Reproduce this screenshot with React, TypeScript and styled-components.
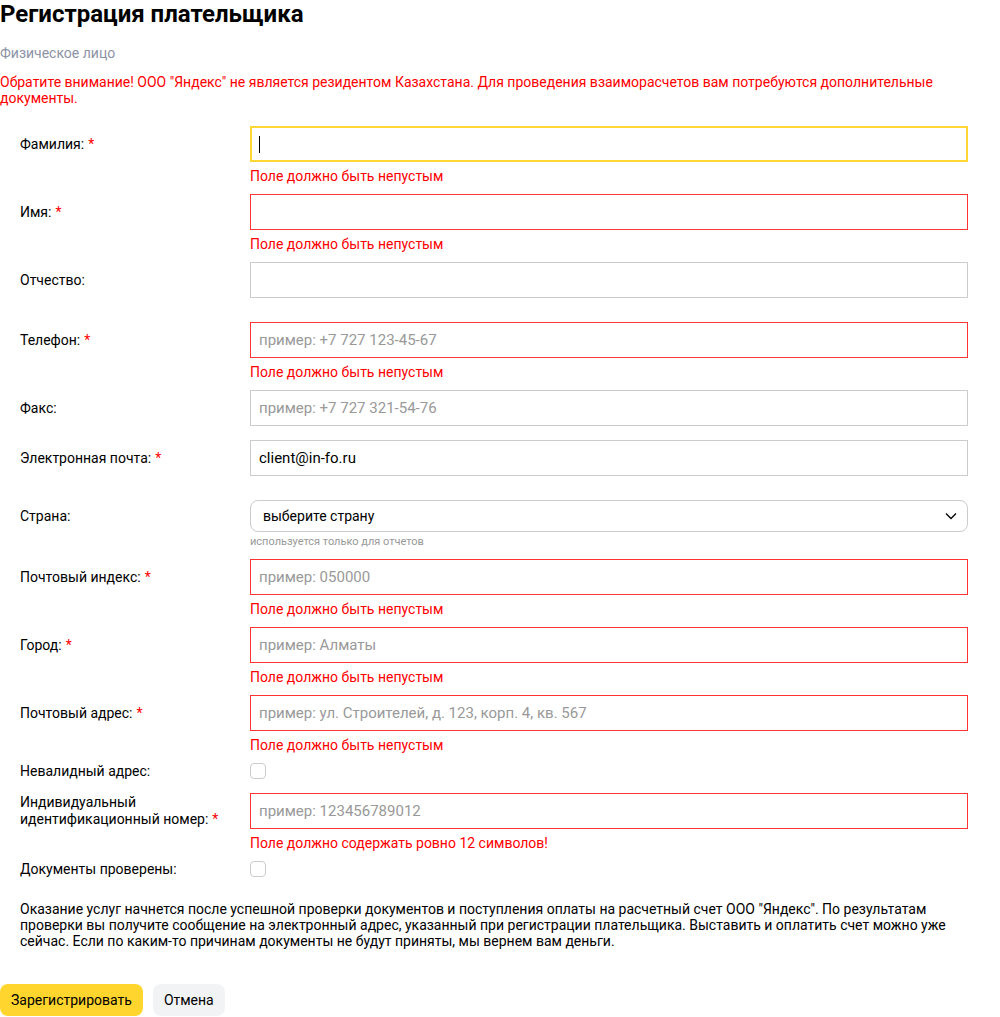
import { createGlobalStyle } from "styled-components";
import styled from "styled-components";

const GlobalStyle = createGlobalStyle`
  body {
    margin: 0;
    background: #fff;
    font-family: Roboto, "Noto Sans", Arial, sans-serif;
    font-size: 14px;
    color: #000;
  }
`;

const Page = styled.div`
  width: 968px;
`;

const Title = styled.h1`
  margin: 0;
  font-size: 24px;
  line-height: 28px;
  font-weight: 700;
`;

const Subtitle = styled.div`
  margin-top: 16px;
  color: #8c93a6;
  line-height: 18px;
`;

const Warning = styled.div`
  margin-top: 12px;
  color: #ff0000;
  line-height: 16px;
`;

const Form = styled.div`
  margin-top: 20px;
`;

const Row = styled.div<{ $after: number }>`
  display: grid;
  grid-template-columns: 250px 718px;
  margin-bottom: ${(p) => p.$after}px;
`;

const Label = styled.div<{ $h: number }>`
  padding-left: 20px;
  height: ${(p) => p.$h}px;
  display: flex;
  align-items: center;
  line-height: 17px;
`;

const Req = styled.span`
  color: #ff0000;
  margin-left: 4px;
`;

const Field = styled.div`
  display: flex;
  flex-direction: column;
`;

const Input = styled.input<{ $state?: "error" | "focus" }>`
  box-sizing: border-box;
  width: 100%;
  height: 36px;
  margin: 0;
  padding: 0 8px;
  font: inherit;
  font-size: 15px;
  color: #000;
  outline: none;
  border-radius: 0;
  border: ${(p) =>
    p.$state === "focus"
      ? "2px solid #fdd835"
      : p.$state === "error"
      ? "1px solid #ff3333"
      : "1px solid #cccccc"};
  padding-left: ${(p) => (p.$state === "focus" ? "7px" : "8px")};
  &::placeholder {
    color: #999999;
  }
`;

const Caret = styled.div`
  box-sizing: border-box;
  height: 36px;
  border: 2px solid #fdd835;
  display: flex;
  align-items: center;
  padding-left: 7px;
  &::before {
    content: "";
    width: 1px;
    height: 17px;
    background: #000;
  }
`;

const Error = styled.div`
  margin-top: 5px;
  color: #ff0000;
  line-height: 18px;
`;

const Select = styled.div`
  box-sizing: border-box;
  height: 32px;
  border: 1px solid #cccccc;
  border-radius: 8px;
  display: flex;
  align-items: center;
  justify-content: space-between;
  padding: 0 10px 0 12px;
  font-size: 14px;
`;

const Hint = styled.div`
  margin-top: 3px;
  color: #999999;
  font-size: 11px;
  line-height: 14px;
`;

const Check = styled.span`
  box-sizing: border-box;
  width: 16px;
  height: 16px;
  border: 1px solid #cccccc;
  border-radius: 4px;
`;

const CheckCell = styled.div`
  display: flex;
  align-items: center;
  height: 16px;
`;

const Notice = styled.p`
  margin: 24px 0 0;
  padding-left: 20px;
  width: 928px;
  line-height: 16px;
`;

const Buttons = styled.div`
  display: flex;
  gap: 10px;
  margin-top: 35px;
`;

const Button = styled.button<{ $primary?: boolean }>`
  height: 32px;
  padding: 0 11px;
  border: none;
  border-radius: 8px;
  font: inherit;
  font-size: 14px;
  color: #000;
  background: ${(p) => (p.$primary ? "#ffd52e" : "#f2f3f5")};
`;

const Chevron = () => (
  <svg width="12" height="8" viewBox="0 0 12 8" fill="none">
    <path d="M1 1.5l5 5 5-5" stroke="#000" strokeWidth="1.3" />
  </svg>
);

const EMPTY = "Поле должно быть непустым";

export default function App() {
  return (
    <Page>
      <GlobalStyle />
      <Title>Регистрация плательщика</Title>
      <Subtitle>Физическое лицо</Subtitle>
      <Warning>
        Обратите внимание! ООО "Яндекс" не является резидентом Казахстана. Для
        проведения взаиморасчетов вам потребуются дополнительные документы.
      </Warning>
      <Form>
        <Row $after={9}>
          <Label $h={36}>
            Фамилия:<Req>*</Req>
          </Label>
          <Field>
            <Caret />
            <Error>{EMPTY}</Error>
          </Field>
        </Row>
        <Row $after={9}>
          <Label $h={36}>
            Имя:<Req>*</Req>
          </Label>
          <Field>
            <Input $state="error" />
            <Error>{EMPTY}</Error>
          </Field>
        </Row>
        <Row $after={24}>
          <Label $h={36}>Отчество:</Label>
          <Field>
            <Input />
          </Field>
        </Row>
        <Row $after={9}>
          <Label $h={36}>
            Телефон:<Req>*</Req>
          </Label>
          <Field>
            <Input $state="error" placeholder="пример: +7 727 123-45-67" />
            <Error>{EMPTY}</Error>
          </Field>
        </Row>
        <Row $after={14}>
          <Label $h={36}>Факс:</Label>
          <Field>
            <Input placeholder="пример: +7 727 321-54-76" />
          </Field>
        </Row>
        <Row $after={24}>
          <Label $h={36}>
            Электронная почта:<Req>*</Req>
          </Label>
          <Field>
            <Input defaultValue="client@in-fo.ru" />
          </Field>
        </Row>
        <Row $after={10}>
          <Label $h={32}>Страна:</Label>
          <Field>
            <Select>
              выберите страну
              <Chevron />
            </Select>
            <Hint>используется только для отчетов</Hint>
          </Field>
        </Row>
        <Row $after={9}>
          <Label $h={36}>
            Почтовый индекс:<Req>*</Req>
          </Label>
          <Field>
            <Input $state="error" placeholder="пример: 050000" />
            <Error>{EMPTY}</Error>
          </Field>
        </Row>
        <Row $after={9}>
          <Label $h={36}>
            Город:<Req>*</Req>
          </Label>
          <Field>
            <Input $state="error" placeholder="пример: Алматы" />
            <Error>{EMPTY}</Error>
          </Field>
        </Row>
        <Row $after={9}>
          <Label $h={36}>
            Почтовый адрес:<Req>*</Req>
          </Label>
          <Field>
            <Input
              $state="error"
              placeholder="пример: ул. Строителей, д. 123, корп. 4, кв. 567"
            />
            <Error>{EMPTY}</Error>
          </Field>
        </Row>
        <Row $after={14}>
          <Label $h={16}>Невалидный адрес:</Label>
          <CheckCell>
            <Check />
          </CheckCell>
        </Row>
        <Row $after={9}>
          <Label $h={36}>
            <span>
              Индивидуальный идентификационный номер:<Req>*</Req>
            </span>
          </Label>
          <Field>
            <Input $state="error" placeholder="пример: 123456789012" />
            <Error>Поле должно содержать ровно 12 символов!</Error>
          </Field>
        </Row>
        <Row $after={0}>
          <Label $h={16}>Документы проверены:</Label>
          <CheckCell>
            <Check />
          </CheckCell>
        </Row>
      </Form>
      <Notice>
        Оказание услуг начнется после успешной проверки документов и поступления
        оплаты на расчетный счет ООО "Яндекс". По результатам проверки вы
        получите сообщение на электронный адрес, указанный при регистрации
        плательщика. Выставить и оплатить счет можно уже сейчас. Если по
        каким-то причинам документы не будут приняты, мы вернем вам деньги.
      </Notice>
      <Buttons>
        <Button $primary>Зарегистрировать</Button>
        <Button>Отмена</Button>
      </Buttons>
    </Page>
  );
}
